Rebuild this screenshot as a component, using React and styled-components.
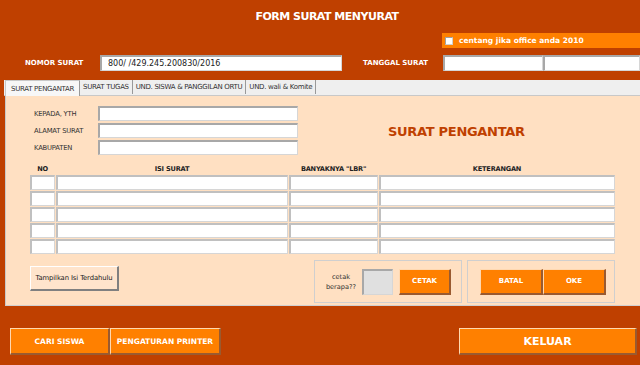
import React from 'react';
import styled, { createGlobalStyle } from 'styled-components';

const colors = {
  rust: '#bf4000',
  orange: '#ff8000',
  peach: '#ffe0c2',
  tabs: '#efefef',
  text: '#222',
};

const GlobalStyle = createGlobalStyle`
  html, body { margin: 0; padding: 0; background: ${colors.rust}; }
  * { box-sizing: border-box; }
`;

const Page = styled.div`
  width: 640px;
  height: 365px;
  background: ${colors.rust};
  font-family: Tahoma, "DejaVu Sans", sans-serif;
  display: flex;
  flex-direction: column;
  overflow: hidden;
`;

const Header = styled.div`
  height: 33px;
  display: flex;
  align-items: center;
  justify-content: center;
  padding-left: 14px;
`;

const Title = styled.h1`
  margin: 0;
  font-size: 11px;
  letter-spacing: -0.5px;
  font-weight: bold;
  color: #fff;
`;

const OfficeBar = styled.label`
  margin-left: 442px;
  height: 15px;
  background: ${colors.orange};
  display: flex;
  align-items: center;
  gap: 6px;
  padding-left: 3px;
  color: #fff;
  font-size: 7.5px;
  font-weight: bold;
`;

const Check = styled.span`
  width: 8px;
  height: 8px;
  background: #fff;
  border: 1px solid #d0d0d0;
  border-top-color: #a0a0a0;
  border-left-color: #a0a0a0;
`;

const FieldRow = styled.div`
  margin-top: 7px;
  height: 16px;
  display: flex;
  align-items: center;
`;

const HeadLabel = styled.span`
  width: ${p => p.$w}px;
  padding-left: ${p => p.$pad}px;
  color: #fff;
  font-size: 7px;
  font-weight: bold;
`;

const Input = styled.div`
  width: ${p => p.$w}px;
  height: ${p => p.$h || 16}px;
  background: ${p => p.$bg || '#fff'};
  border: 1px solid #d6d6d6;
  border-top: 2px solid #a8a8a8;
  border-left: 2px solid #a8a8a8;
  font-size: 8px;
  color: ${colors.text};
  display: flex;
  align-items: center;
  padding-left: 6px;
  flex-shrink: 0;
`;

const Tabs = styled.div`
  margin-top: 9px;
  margin-left: 4px;
  height: 16px;
  background: ${colors.tabs};
  display: flex;
  align-items: flex-end;
  padding-left: 1px;
  border-bottom: 1px solid #c8c8c8;
`;

const Tab = styled.div`
  height: ${p => (p.$active ? 16 : 14)}px;
  padding: 0 ${p => (p.$active ? 5 : 3)}px;
  display: flex;
  align-items: center;
  font-size: 7px;
  letter-spacing: -0.3px;
  color: #333;
  background: ${p => (p.$active ? '#f7f7f7' : 'transparent')};
  border: ${p => (p.$active ? '1px solid #c8c8c8' : 'none')};
  border-bottom: none;
  border-right: 1px solid #999;
  margin-bottom: ${p => (p.$active ? -1 : 1)}px;
`;

const Panel = styled.div`
  margin-left: 5px;
  height: 210px;
  background: ${colors.peach};
  border-left: 1px solid #c8c8c8;
  border-bottom: 1px solid #d0d0d0;
  display: flex;
  flex-direction: column;
`;

const TopArea = styled.div`
  display: flex;
  align-items: center;
  padding-top: 10px;
`;

const Fields = styled.div`
  display: grid;
  grid-template-columns: 64px 200px;
  row-gap: 2px;
  padding-left: 28px;
  align-items: center;
`;

const FieldLabel = styled.span`
  font-size: 6.8px;
  color: #333;
  letter-spacing: -0.2px;
`;

const PanelTitle = styled.h2`
  margin: 0 0 0 90px;
  padding-top: 2px;
  font-size: 13px;
  font-weight: bold;
  color: ${colors.rust};
  letter-spacing: -0.3px;
`;

const Table = styled.div`
  margin-top: 10px;
  margin-left: 24px;
  display: grid;
  grid-template-columns: 25px 232px 89px 236px;
  column-gap: 1px;
  row-gap: 1px;
`;

const Th = styled.div`
  height: 9px;
  line-height: 9px;
  font-size: 6.6px;
  font-weight: bold;
  color: #222;
  text-align: center;
  letter-spacing: -0.2px;
`;

const Cell = styled.div`
  height: 15px;
  background: #fff;
  border: 1px solid #d6d6d6;
  border-top: 2px solid #c0c0c0;
  border-left: 2px solid #c0c0c0;
`;

const BottomArea = styled.div`
  display: flex;
  align-items: flex-start;
  margin-top: 6px;
  padding-left: 24px;
`;

const PlainButton = styled.div`
  margin-top: 6px;
  width: 89px;
  height: 25px;
  display: flex;
  align-items: center;
  justify-content: center;
  font-size: 6.8px;
  color: #222;
  letter-spacing: -0.1px;
  background: #ffe4cc;
  border: 1px solid #fff;
  border-right: 2px solid #808080;
  border-bottom: 2px solid #808080;
`;

const Frame = styled.div`
  margin-left: ${p => p.$ml}px;
  width: 148px;
  height: 43px;
  border: 1px solid #cfcfcf;
  display: flex;
  align-items: center;
  padding-left: ${p => p.$pl}px;
`;

const SmallNote = styled.div`
  width: 42px;
  font-size: 6.6px;
  color: #333;
  text-align: center;
  line-height: 10px;
`;

const OrangeButton = styled.div`
  width: ${p => p.$w}px;
  height: ${p => p.$h || 26}px;
  background: ${colors.orange};
  color: #fff;
  font-weight: bold;
  font-size: ${p => p.$fs || 7}px;
  display: flex;
  align-items: center;
  justify-content: center;
  border: 1px solid #ffd8b0;
  border-right: 2px solid #9a5a30;
  border-bottom: 2px solid #9a5a30;
  margin-left: ${p => p.$ml || 0}px;
  flex-shrink: 0;
`;

const Footer = styled.div`
  margin-top: 22px;
  display: flex;
  padding-left: 10px;
`;

const headers = ['NO', 'ISI SURAT', 'BANYAKNYA "LBR"', 'KETERANGAN'];

export default function App() {
  return (
    <Page>
      <GlobalStyle />
      <Header>
        <Title>FORM SURAT MENYURAT</Title>
      </Header>
      <OfficeBar>
        <Check />
        centang jika office anda 2010
      </OfficeBar>
      <FieldRow>
        <HeadLabel $w={100} $pad={25}>NOMOR SURAT</HeadLabel>
        <Input $w={242}>800/ /429.245.200830/2016</Input>
        <HeadLabel $w={101} $pad={21}>TANGGAL SURAT</HeadLabel>
        <Input $w={100} />
        <Input $w={97} />
      </FieldRow>
      <Tabs>
        <Tab $active>SURAT PENGANTAR</Tab>
        <Tab>SURAT TUGAS</Tab>
        <Tab>UND. SISWA &amp; PANGGILAN ORTU</Tab>
        <Tab>UND. wali &amp; Komite</Tab>
      </Tabs>
      <Panel>
        <TopArea>
          <Fields>
            <FieldLabel>KEPADA, YTH</FieldLabel>
            <Input $w={200} $h={15} />
            <FieldLabel>ALAMAT SURAT</FieldLabel>
            <Input $w={200} $h={15} />
            <FieldLabel>KABUPATEN</FieldLabel>
            <Input $w={200} $h={15} />
          </Fields>
          <PanelTitle>SURAT PENGANTAR</PanelTitle>
        </TopArea>
        <Table>
          {headers.map(h => (
            <Th key={h}>{h}</Th>
          ))}
          {Array.from({ length: 20 }, (_, i) => (
            <Cell key={i} />
          ))}
        </Table>
        <BottomArea>
          <PlainButton>Tampilkan Isi Terdahulu</PlainButton>
          <Frame $ml={195} $pl={5}>
            <SmallNote>cetak berapa??</SmallNote>
            <Input $w={31} $h={26} $bg="#e0e0e0" />
            <OrangeButton $w={52} $ml={6}>CETAK</OrangeButton>
          </Frame>
          <Frame $ml={5} $pl={12}>
            <OrangeButton $w={63}>BATAL</OrangeButton>
            <OrangeButton $w={63}>OKE</OrangeButton>
          </Frame>
        </BottomArea>
      </Panel>
      <Footer>
        <OrangeButton $w={100} $h={27} $fs={7.5}>CARI SISWA</OrangeButton>
        <OrangeButton $w={111} $h={27} $fs={7.5}>PENGATURAN PRINTER</OrangeButton>
        <OrangeButton $w={178} $h={27} $ml={238} $fs={11}>KELUAR</OrangeButton>
      </Footer>
    </Page>
  );
}
